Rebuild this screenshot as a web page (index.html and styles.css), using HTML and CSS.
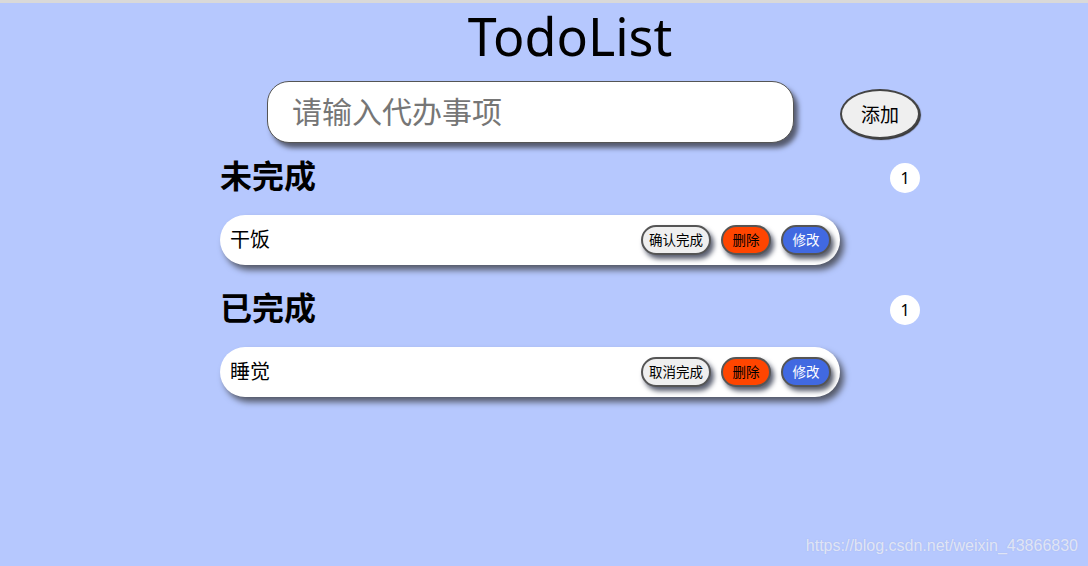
FILE: index.html
```html
<!DOCTYPE html>
<html lang="zh">
<head>
<meta charset="utf-8">
<title>TodoList</title>
<link rel="stylesheet" href="styles.css">
</head>
<body>
<div class="topbar"></div>
<div class="app">
  <h1 class="title">TodoList</h1>
  <div class="add-row">
    <input class="todo-input" type="text" placeholder="请输入代办事项">
    <button class="add-btn">添加</button>
  </div>
  <section class="group">
    <div class="group-head">
      <h2 class="group-title">未完成</h2>
      <span class="count">1</span>
    </div>
    <ul class="list">
      <li class="item">
        <span class="item-text">干饭</span>
        <div class="actions">
          <button class="btn btn-done">确认完成</button>
          <button class="btn btn-del">删除</button>
          <button class="btn btn-edit">修改</button>
        </div>
      </li>
    </ul>
  </section>
  <section class="group">
    <div class="group-head">
      <h2 class="group-title">已完成</h2>
      <span class="count">1</span>
    </div>
    <ul class="list">
      <li class="item">
        <span class="item-text">睡觉</span>
        <div class="actions">
          <button class="btn btn-done">取消完成</button>
          <button class="btn btn-del">删除</button>
          <button class="btn btn-edit">修改</button>
        </div>
      </li>
    </ul>
  </section>
</div>
<div class="watermark">https://blog.csdn.net/weixin_43866830</div>
</body>
</html>
```

FILE: styles.css
```css
html, body {
  margin: 0;
  padding: 0;
}
body {
  background: #b6c8fe;
  height: 566px;
  overflow: hidden;
  font-family: "Noto Sans", "Noto Sans CJK SC", sans-serif;
  color: #000;
}
.topbar {
  height: 3px;
  background: #d9d9d9;
}
.app {
  width: 700px;
  margin-left: 220px;
}
.title {
  margin: 0;
  height: 72px;
  line-height: 66px;
  text-align: center;
  font-weight: 400;
  font-size: 52px;
}
.add-row {
  display: flex;
  justify-content: flex-end;
  align-items: center;
  gap: 46px;
  margin-top: 6px;
}
.todo-input {
  box-sizing: border-box;
  width: 527px;
  height: 62px;
  border: 1px solid #555;
  border-radius: 22px;
  padding: 0 24px 4px;
  font-family: "Noto Sans CJK SC", sans-serif;
  font-size: 30px;
  background: #fff;
  box-shadow: 4px 5px 5px #555a6e;
  outline: none;
}
.todo-input::placeholder {
  color: #767676;
}
.add-btn {
  box-sizing: border-box;
  width: 80px;
  height: 50px;
  margin-top: 4px;
  border: 2px solid #444;
  border-radius: 50%;
  background: #efefef;
  font-family: "Noto Sans CJK SC", sans-serif;
  font-size: 19px;
  color: #000;
  padding: 0 0 2px;
  box-shadow: 1px 1px 1px #333;
}
.group {
  margin-top: 20px;
}
.group + .group {
  margin-top: 30px;
}
.group-head {
  display: flex;
  justify-content: space-between;
  align-items: center;
  height: 30px;
}
.group-title {
  margin: 0 0 9px 0;
  font-family: "Noto Sans CJK SC", sans-serif;
  font-size: 32px;
  font-weight: 700;
  line-height: 30px;
}
.count {
  width: 30px;
  height: 30px;
  border-radius: 50%;
  background: #fff;
  display: flex;
  align-items: center;
  justify-content: center;
  font-family: "Noto Sans", sans-serif;
  font-size: 16px;
  line-height: 1;
}
.list {
  list-style: none;
  margin: 22px 0 0 0;
  padding: 0;
}
.item {
  box-sizing: border-box;
  width: 620px;
  height: 50px;
  background: #fff;
  border-radius: 25px;
  box-shadow: 4px 5px 6px #555a6a;
  display: flex;
  align-items: center;
  justify-content: space-between;
  padding: 0 9px 0 10px;
}
.item-text {
  font-family: "Noto Sans CJK SC", sans-serif;
  font-size: 20px;
  margin-bottom: 4px;
}
.actions {
  display: flex;
  gap: 10px;
}
.btn {
  box-sizing: border-box;
  height: 30px;
  width: 50px;
  border: 2px solid #555;
  border-radius: 15px;
  padding: 0 0 2px;
  font-family: "Noto Sans CJK SC", sans-serif;
  font-size: 13.5px;
  box-shadow: 3px 4px 5px #5a5f70;
  color: #000;
}
.btn-done {
  width: 70px;
  background: #efefef;
}
.btn-del {
  background: #ff4500;
}
.btn-edit {
  background: #4169e1;
  color: #fff;
}
.watermark {
  position: absolute;
  right: 10px;
  bottom: 11px;
  font-family: "Liberation Sans", Arial, sans-serif;
  font-size: 16px;
  color: rgba(255, 255, 255, 0.65);
  text-shadow: 0 0 1px rgba(150, 160, 200, 0.5);
}
```
